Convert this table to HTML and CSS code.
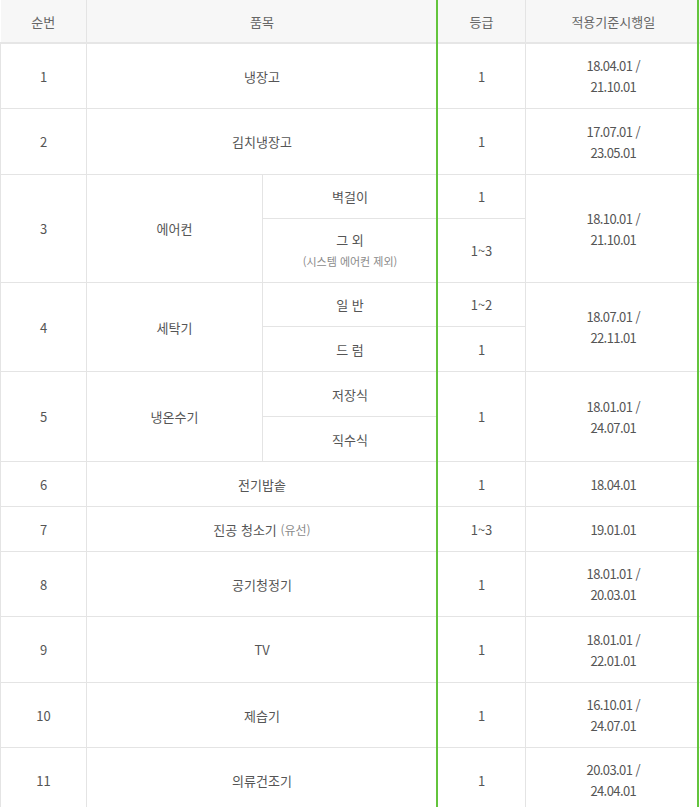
FILE: index.html
```html
<!DOCTYPE html>
<html lang="ko">
<head>
<meta charset="utf-8">
<link rel="stylesheet" href="styles.css">
</head>
<body>
<div class="wrap">
<table class="tbl">
  <colgroup>
    <col class="c1"><col class="c2"><col class="c3"><col class="c4"><col class="c5">
  </colgroup>
  <thead>
    <tr><th>순번</th><th colspan="2">품목</th><th>등급</th><th>적용기준시행일</th></tr>
  </thead>
  <tbody>
    <tr class="h65"><td>1</td><td colspan="2">냉장고</td><td>1</td><td class="d">18.04.01 /<br>21.10.01</td></tr>
    <tr class="h66"><td>2</td><td colspan="2">김치냉장고</td><td>1</td><td class="d">17.07.01 /<br>23.05.01</td></tr>
    <tr class="h44"><td rowspan="2">3</td><td rowspan="2">에어컨</td><td>벽걸이</td><td>1</td><td rowspan="2" class="d">18.10.01 /<br>21.10.01</td></tr>
    <tr class="h64"><td>그 외<br><span class="sub">(시스템 에어컨 제외)</span></td><td>1~3</td></tr>
    <tr class="h44"><td rowspan="2">4</td><td rowspan="2">세탁기</td><td>일 반</td><td>1~2</td><td rowspan="2" class="d">18.07.01 /<br>22.11.01</td></tr>
    <tr class="h45"><td>드 럼</td><td>1</td></tr>
    <tr class="h45"><td rowspan="2">5</td><td rowspan="2">냉온수기</td><td>저장식</td><td rowspan="2">1</td><td rowspan="2" class="d">18.01.01 /<br>24.07.01</td></tr>
    <tr class="h45"><td>직수식</td></tr>
    <tr class="h45"><td>6</td><td colspan="2">전기밥솥</td><td>1</td><td class="d">18.04.01</td></tr>
    <tr class="h45"><td>7</td><td colspan="2">진공 청소기 <span class="sub2">(유선)</span></td><td>1~3</td><td class="d">19.01.01</td></tr>
    <tr class="h65"><td>8</td><td colspan="2">공기청정기</td><td>1</td><td class="d">18.01.01 /<br>20.03.01</td></tr>
    <tr class="h66"><td>9</td><td colspan="2">TV</td><td>1</td><td class="d">18.01.01 /<br>22.01.01</td></tr>
    <tr class="h65"><td>10</td><td colspan="2">제습기</td><td>1</td><td class="d">16.10.01 /<br>24.07.01</td></tr>
    <tr class="h65"><td>11</td><td colspan="2">의류건조기</td><td>1</td><td class="d">20.03.01 /<br>24.04.01</td></tr>
  </tbody>
</table>
<div class="highlight"></div>
</div>
</body>
</html>
```
FILE: styles.css
```css
html, body {
  margin: 0;
  padding: 0;
  background: #fff;
}
.wrap {
  position: relative;
  width: 700px;
}
.tbl {
  width: 700px;
  border-collapse: collapse;
  table-layout: fixed;
  font-family: "Noto Sans CJK KR", "Noto Sans", sans-serif;
  font-size: 13px;
  color: #555;
}
.c1 { width: 86px; }
.c2 { width: 176px; }
.c3 { width: 175px; }
.c4 { width: 88px; }
.c5 { width: 175px; }
.tbl th {
  height: 42px;
  padding: 0;
  background: #f7f7f7;
  font-weight: normal;
  color: #666;
  border-left: 1px solid #e4e4e4;
  border-bottom: 2px solid #e6e6e6;
}
.tbl th:first-child { border-left: none; }
.tbl td {
  padding: 0;
  text-align: center;
  vertical-align: middle;
  line-height: 21px;
  border-left: 1px solid #e4e4e4;
  border-bottom: 1px solid #e4e4e4;
}
.tbl td.d {
  letter-spacing: -0.6px;
}
.h44 td { height: 43px; }
.h45 td { height: 44px; }
.h64 td { height: 63px; }
.h65 td { height: 64px; }
.h66 td { height: 65px; }
.tbl tr.h44 td[rowspan], .tbl tr.h45 td[rowspan] { height: auto; }
.sub {
  font-size: 11px;
  color: #8a8a8a;
}
.sub2 {
  font-size: 12px;
  color: #8a8a8a;
}
.highlight {
  position: absolute;
  left: 436px;
  top: -3px;
  width: 259px;
  bottom: -3px;
  border: 2px solid #63c43c;
  pointer-events: none;
}
```
